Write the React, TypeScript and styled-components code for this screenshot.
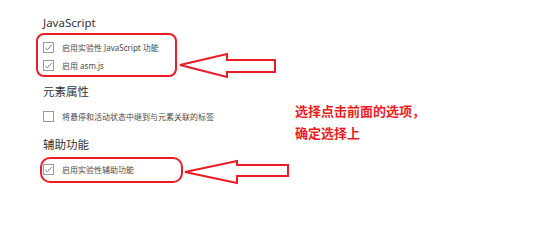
import React from 'react'
import styled, { createGlobalStyle } from 'styled-components'

const GlobalStyle = createGlobalStyle`
  html, body {
    margin: 0;
    padding: 0;
    background: #ffffff;
  }
  body {
    font-family: 'Noto Sans', 'Noto Sans CJK SC', sans-serif;
  }
`

const ANNOTATION_RED = '#ec1c24'

const Page = styled.div`
  position: relative;
  width: 550px;
  height: 242px;
  display: flex;
  overflow: hidden;
  background: #ffffff;
`

const Settings = styled.div`
  width: 252px;
  padding: 15px 0 0 43px;
  display: flex;
  flex-direction: column;
`

const Section = styled.section<{ gapTop: number }>`
  display: flex;
  flex-direction: column;
  margin-top: ${({ gapTop }) => gapTop}px;
`

const SectionTitle = styled.div`
  height: 16px;
  line-height: 16px;
  font-size: 11.5px;
  color: #333333;
  margin-bottom: 7px;
  white-space: nowrap;
`

const Group = styled.div`
  position: relative;
  display: flex;
  flex-direction: column;
`

// red hand-drawn highlight around a group of options
const Outline = styled.div<{ top: number; left: number; w: number; h: number; radius: number }>`
  position: absolute;
  top: ${({ top }) => top}px;
  left: ${({ left }) => left}px;
  width: ${({ w }) => w}px;
  height: ${({ h }) => h}px;
  box-sizing: border-box;
  border: 2px solid ${ANNOTATION_RED};
  border-radius: ${({ radius }) => radius}px;
  pointer-events: none;
`

const Row = styled.label`
  display: flex;
  align-items: center;
  height: 18px;
  gap: 8px;
  font-size: 8px;
  color: #4a4a4a;
  white-space: nowrap;
`

const Box = styled.span`
  width: 9px;
  height: 9px;
  border: 1px solid #9a9a9a;
  background: #ffffff;
  display: flex;
  align-items: center;
  justify-content: center;
  flex: none;
`

const Note = styled.div`
  padding-top: 100px;
  font-size: 13px;
  line-height: 22px;
  font-weight: 700;
  color: ${ANNOTATION_RED};
  white-space: nowrap;
`

const Arrows = styled.svg`
  position: absolute;
  left: 0;
  top: 0;
  pointer-events: none;
`

function Check({ checked, label }: { checked: boolean; label: string }) {
  return (
    <Row>
      <Box>
        {checked ? (
          <svg width="9" height="9" viewBox="0 0 9 9">
            <path d="M1.2 4.6 L3.4 6.8 L7.9 1.8" fill="none" stroke="#6a6a6a" strokeWidth="0.9" />
          </svg>
        ) : null}
      </Box>
      {label}
    </Row>
  )
}

export default function App() {
  return (
    <Page>
      <GlobalStyle />
      <Settings>
        <Section gapTop={0}>
          <SectionTitle>JavaScript</SectionTitle>
          <Group>
            <Check checked label="启用实验性 JavaScript 功能" />
            <Check checked label="启用 asm.js" />
            <Outline top={-5} left={-7} w={141} h={44} radius={8} />
          </Group>
        </Section>
        <Section gapTop={10}>
          <SectionTitle>元素属性</SectionTitle>
          <Check checked={false} label="将悬停和活动状态中继到与元素关联的标签" />
        </Section>
        <Section gapTop={12}>
          <SectionTitle>辅助功能</SectionTitle>
          <Group>
            <Check checked label="启用实验性辅助功能" />
            <Outline top={-3} left={-3} w={143} h={26} radius={10} />
          </Group>
        </Section>
      </Settings>
      <Note>
        <div>选择点击前面的选项，</div>
        <div>确定选择上</div>
      </Note>
      <Arrows width="550" height="242" viewBox="0 0 550 242">
        <polygon
          points="180,65 227,54 227,60 275,60 275,72 227,72 227,77"
          fill="#ffffff"
          stroke={ANNOTATION_RED}
          strokeWidth="2"
        />
        <polygon
          points="185,172 237,161 237,165 288,165 288,176 237,176 237,183"
          fill="#ffffff"
          stroke={ANNOTATION_RED}
          strokeWidth="2"
        />
      </Arrows>
    </Page>
  )
}
